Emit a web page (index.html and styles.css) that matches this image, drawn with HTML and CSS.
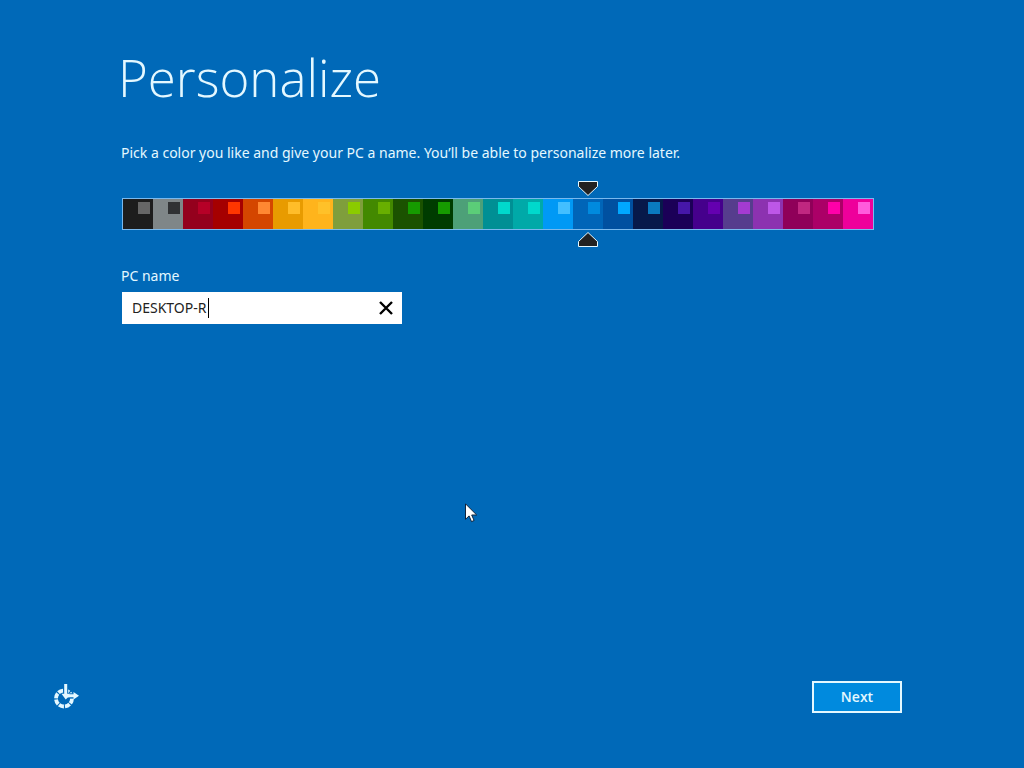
FILE: index.html
```html
<!DOCTYPE html>
<html lang="en">
<head>
<meta charset="utf-8">
<title>Personalize</title>
<link rel="stylesheet" href="styles.css">
</head>
<body>
<form class="setup">
  <main class="content">
    <h1 class="title">Personalize</h1>
    <p class="intro">Pick a color you like and give your PC a name. You’ll be able to personalize more later.</p>
    <div class="palette" role="radiogroup" aria-label="Color">
      <div class="cell"><input class="swatch black" type="radio" name="color" aria-label="Black"></div>
      <div class="cell"><input class="swatch gray" type="radio" name="color" aria-label="Gray"></div>
      <div class="cell"><input class="swatch crimson" type="radio" name="color" aria-label="Crimson"></div>
      <div class="cell"><input class="swatch red" type="radio" name="color" aria-label="Red"></div>
      <div class="cell"><input class="swatch orange" type="radio" name="color" aria-label="Orange"></div>
      <div class="cell"><input class="swatch amber" type="radio" name="color" aria-label="Amber"></div>
      <div class="cell"><input class="swatch yellow" type="radio" name="color" aria-label="Yellow"></div>
      <div class="cell"><input class="swatch olive" type="radio" name="color" aria-label="Olive"></div>
      <div class="cell"><input class="swatch green" type="radio" name="color" aria-label="Green"></div>
      <div class="cell"><input class="swatch moss" type="radio" name="color" aria-label="Moss"></div>
      <div class="cell"><input class="swatch forest" type="radio" name="color" aria-label="Forest"></div>
      <div class="cell"><input class="swatch sage" type="radio" name="color" aria-label="Sage"></div>
      <div class="cell"><input class="swatch teal" type="radio" name="color" aria-label="Teal"></div>
      <div class="cell"><input class="swatch turquoise" type="radio" name="color" aria-label="Turquoise"></div>
      <div class="cell"><input class="swatch sky" type="radio" name="color" aria-label="Sky"></div>
      <div class="cell">
        <input class="swatch blue" type="radio" name="color" aria-label="Blue" checked>
        <svg class="marker marker-top" viewBox="0 0 20 15" aria-hidden="true"><path d="M.5.5h19v5l-9.500 9-9.500-9z"/></svg>
        <svg class="marker marker-bottom" viewBox="0 0 20 15" aria-hidden="true"><path d="M.5 14.500h19v-5L10 .5l-9.500 9z"/></svg>
      </div>
      <div class="cell"><input class="swatch cobalt" type="radio" name="color" aria-label="Cobalt"></div>
      <div class="cell"><input class="swatch navy" type="radio" name="color" aria-label="Navy"></div>
      <div class="cell"><input class="swatch midnight" type="radio" name="color" aria-label="Midnight"></div>
      <div class="cell"><input class="swatch indigo" type="radio" name="color" aria-label="Indigo"></div>
      <div class="cell"><input class="swatch plum" type="radio" name="color" aria-label="Plum"></div>
      <div class="cell"><input class="swatch violet" type="radio" name="color" aria-label="Violet"></div>
      <div class="cell"><input class="swatch wine" type="radio" name="color" aria-label="Wine"></div>
      <div class="cell"><input class="swatch raspberry" type="radio" name="color" aria-label="Raspberry"></div>
      <div class="cell"><input class="swatch magenta" type="radio" name="color" aria-label="Magenta"></div>
    </div>
    <label class="name-label" for="pc-name">PC name</label>
    <div class="name-box">
      <input class="name-input" id="pc-name" type="text" value="DESKTOP-R" spellcheck="false">
      <span class="caret"></span>
      <button class="clear" type="button" aria-label="Clear">
        <svg viewBox="0 0 14 14" width="14" height="14" aria-hidden="true"><path d="M1 1l12 12M13 1L1 13"/></svg>
      </button>
    </div>
  </main>
  <footer class="footer">
    <button class="ease" type="button" aria-label="Ease of access">
      <svg viewBox="0 0 26 26" width="26" height="26" aria-hidden="true">
        <circle class="ring" cx="11" cy="14.500" r="8"/>
        <path class="halo" d="M12.700 0v12M14 11.800h9"/>
        <path class="arrow" d="M12.700 0v11M14 11.800h8"/>
        <path class="heads" d="M8.500 9.700h8v3.500h-1.500l-2.300 2.200zM20.500 8.100l5.500 3.700-5.500 3.700z"/>
      </svg>
    </button>
    <button class="next" type="button">Next</button>
  </footer>
</form>
<svg class="pointer" viewBox="0 0 13 20" width="13" height="20" aria-hidden="true"><path d="M.5.800v15.500l3.600-3.400 2.400 5.700 2.600-1.100-2.400-5.500h5z"/></svg>
</body>
</html>
```
FILE: styles.css
```css
* { box-sizing: border-box; }

body {
  margin: 0;
  background: #0069b8;
  color: #e4f8ff;
  font: 14px/20px "Noto Sans", "Open Sans", sans-serif;
}

button, input { font: inherit; margin: 0; }

.setup {
  display: flex;
  flex-direction: column;
  justify-content: space-between;
  min-height: 100vh;
}

.content { padding: 40px 122px 0 121px; }

.title {
  margin: 0 0 0 -3px;
  font-family: "Open Sans", "Noto Sans", sans-serif;
  font-size: 51px;
  line-height: 74px;
  font-weight: 300;
}

.intro { margin: 29px 0 35px; }

.palette {
  display: grid;
  grid-template-columns: repeat(25, 30px);
  width: max-content;
  margin-left: 1px;
  border: 1px solid #79b9ee;
}

.cell { position: relative; height: 30px; }

.swatch {
  display: block;
  appearance: none;
  width: 100%;
  height: 100%;
  background: linear-gradient(var(--accent), var(--accent)) 15px 3px / 12px 12px no-repeat var(--base);
}

.black { --base: #1d1d1d; --accent: #666; }
.gray { --base: #7f8688; --accent: #303234; }
.crimson { --base: #94001d; --accent: #b60027; }
.red { --base: #a50000; --accent: #ff3600; }
.orange { --base: #d44600; --accent: #ff8732; }
.amber { --base: #e89b00; --accent: #ffbd29; }
.yellow { --base: #ffb41c; --accent: #ffc129; }
.olive { --base: #7f9e3c; --accent: #8bcb00; }
.green { --base: #438900; --accent: #68af00; }
.moss { --base: #1b5200; --accent: #169b00; }
.forest { --base: #003c00; --accent: #169b00; }
.sage { --base: #4da078; --accent: #5bcd78; }
.teal { --base: #008f94; --accent: #00d8cc; }
.turquoise { --base: #00a9a8; --accent: #00d8cc; }
.sky { --base: #0099f5; --accent: #43bfff; }
.blue { --base: #0065b8; --accent: #008ade; }
.cobalt { --base: #0050a0; --accent: #00a8ff; }
.navy { --base: #07194a; --accent: #0a7abf; }
.midnight { --base: #1b0057; --accent: #4617a9; }
.indigo { --base: #45008c; --accent: #6400b0; }
.plum { --base: #563d8d; --accent: #a43bd1; }
.violet { --base: #8c32b0; --accent: #bd57e8; }
.wine { --base: #8f0059; --accent: #c02780; }
.raspberry { --base: #ab0067; --accent: #ff00a9; }
.magenta { --base: #ee009b; --accent: #ff5bdc; }

.marker {
  position: absolute;
  left: 5px;
  width: 20px;
  height: 15px;
  fill: #222;
  stroke: #e4f8ff;
}
.marker-top { top: -18px; }
.marker-bottom { bottom: -18px; }

.name-label { display: block; margin: 36px 0 6px; }

.name-box {
  position: relative;
  display: flex;
  width: 280px;
  height: 32px;
  margin-left: 1px;
  background: #fff;
}

.name-input {
  flex: 1;
  min-width: 0;
  padding: 0 0 0 10px;
  border: 0;
  outline: 0;
  background: none;
  color: #222;
}

.caret {
  position: absolute;
  left: 86px;
  top: 6px;
  width: 1px;
  height: 20px;
  background: #000;
}

.clear {
  display: grid;
  place-items: center;
  width: 32px;
  padding: 0;
  border: 0;
  background: none;
}
.clear path { fill: none; stroke: #000; stroke-width: 2.400; }

.footer {
  display: flex;
  justify-content: space-between;
  align-items: center;
  padding: 0 122px 55px 53px;
}

.ease {
  display: flex;
  padding: 0;
  border: 0;
  background: none;
}
.ring { fill: none; stroke: #e4f8ff; stroke-width: 3.800; stroke-dasharray: 5.180 1.100; }
.halo { fill: none; stroke: #0069b8; stroke-width: 5; }
.arrow { fill: none; stroke: #e4f8ff; stroke-width: 3; }
.heads { fill: #e4f8ff; }

.next {
  width: 90px;
  height: 32px;
  padding: 0;
  border: 2px solid #e4f8ff;
  background: #008ade;
  color: #e4f8ff;
  font-family: "Open Sans", "Noto Sans", sans-serif;
  font-weight: 600;
}

.pointer { position: absolute; left: 465px; top: 503px; }
.pointer path { fill: #fff; stroke: #10243c; }
```
